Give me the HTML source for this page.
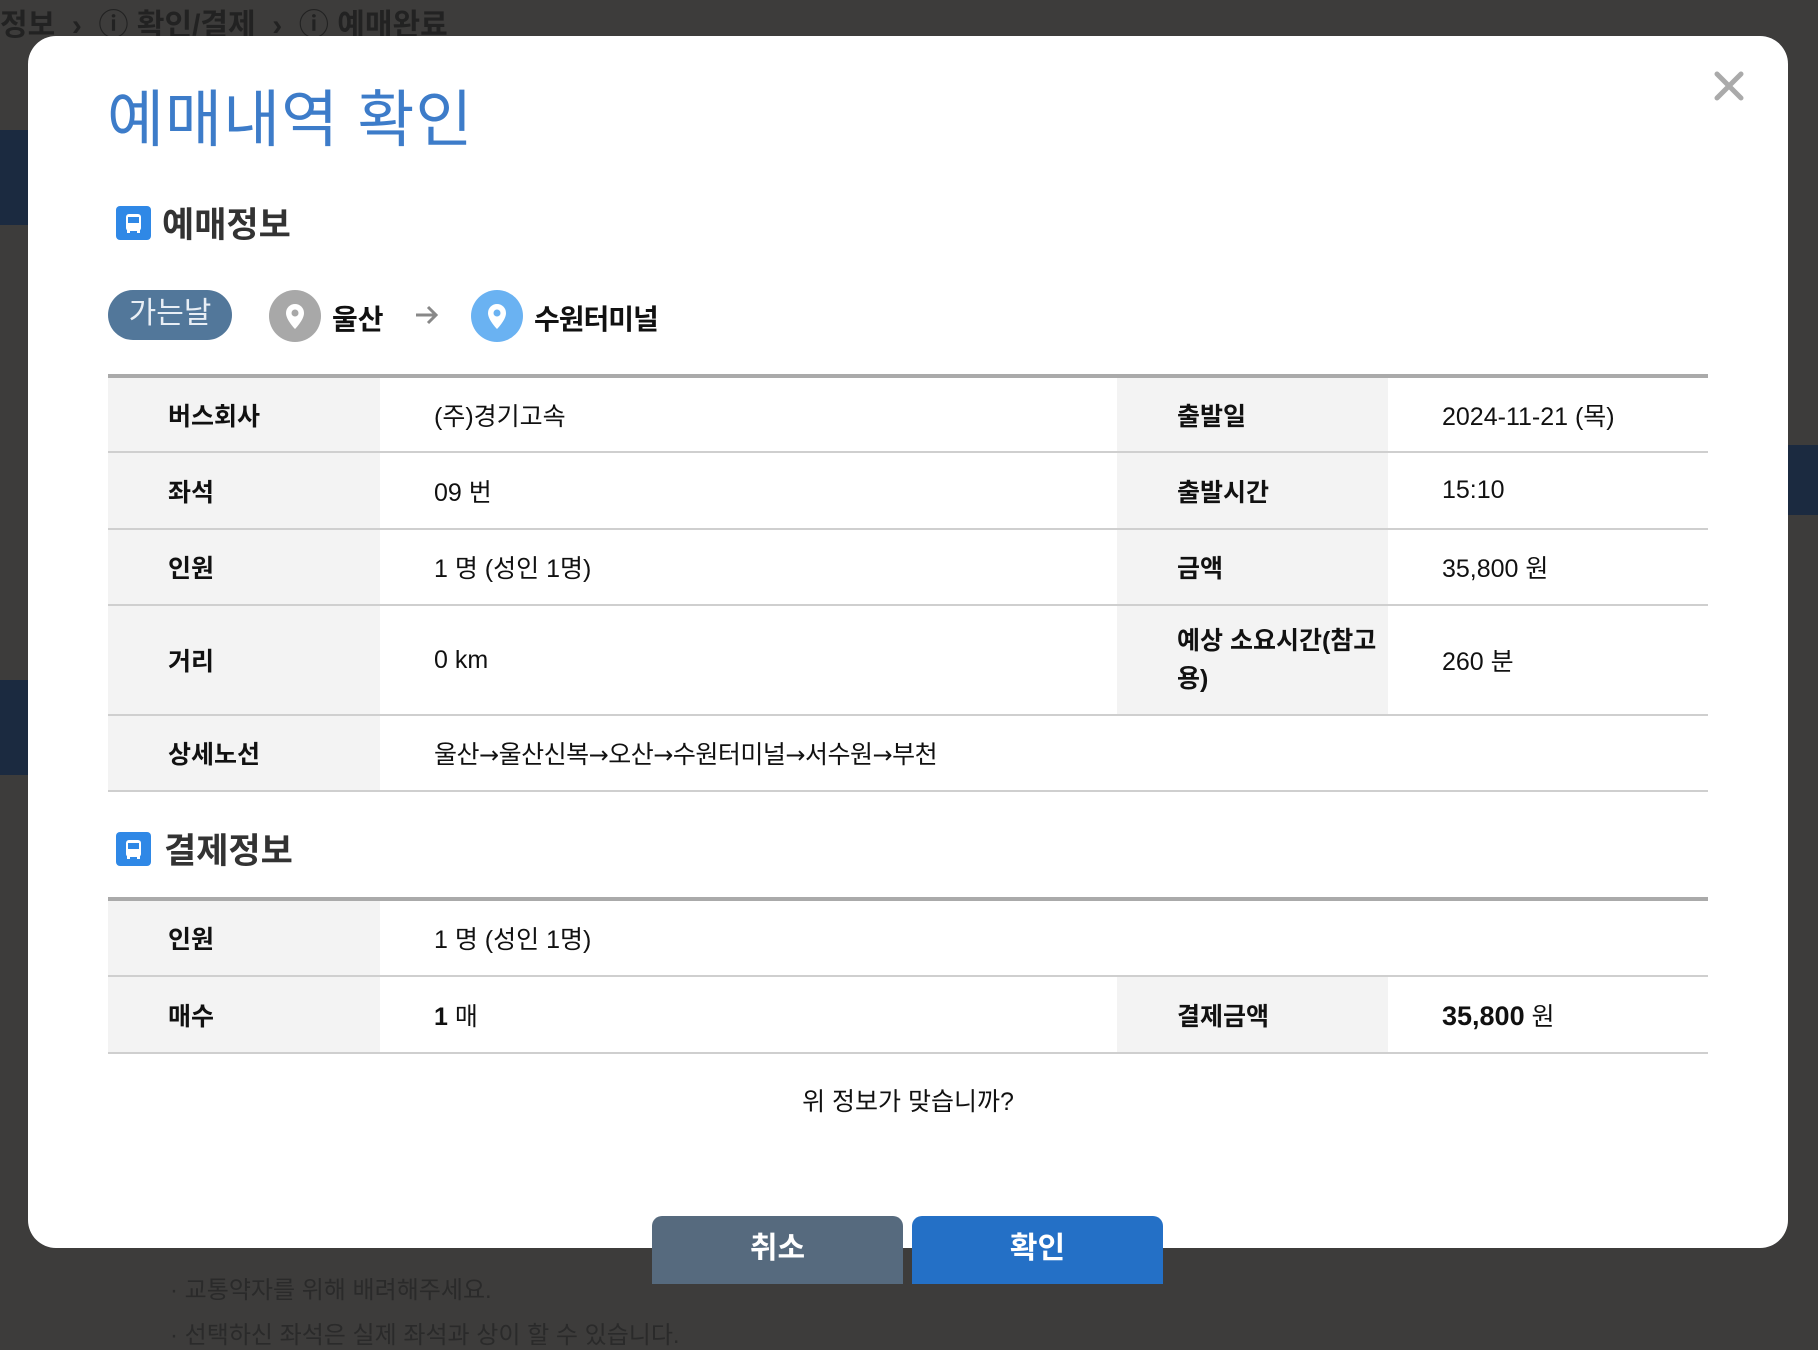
<!DOCTYPE html>
<html><head><meta charset="utf-8"><style>
*{margin:0;padding:0;box-sizing:border-box}
body{width:1818px;height:1346px;overflow:hidden;background:#3d3c3b;font-family:"Liberation Sans","Noto Sans CJK KR",sans-serif;position:relative}
.bgt{position:absolute;color:#2a2a2a;font-size:30px;font-weight:bold}
.modal{position:absolute;left:28px;top:36px;width:1760px;height:1212px;background:#fff;border-radius:28px}
.a{position:absolute}
table{position:absolute;left:80px;width:1600px;border-collapse:collapse;font-size:25px;color:#111}
td{border-bottom:2px solid #cfcfcf;vertical-align:middle}
td.l{background:#f3f3f3;font-weight:bold;padding-left:60px}
td.v{padding-left:54px}
.ar{font-family:"DejaVu Sans",sans-serif;font-size:24px}
.hd{font-size:35px;font-weight:bold;color:#333}
.ic{width:35px;height:34px;background:#2f88e6;border-radius:4px}
.pin{border-radius:50%;width:52px;height:52px}
.btn{position:absolute;top:1216px;width:251px;height:68px;border-radius:10px 10px 0 0;color:#fff;font-size:30px;font-weight:bold;text-align:center;line-height:66px}
</style></head><body>
<div class="bgt" style="left:0;top:0;color:#222">정보 &nbsp;› &nbsp;ⓘ 확인/결제 &nbsp;› &nbsp;ⓘ 예매완료</div>
<div class="a" style="left:0;top:130px;width:28px;height:95px;background:#1b2a40"></div>
<div class="a" style="left:0;top:680px;width:28px;height:95px;background:#1b2a40"></div>
<div class="a" style="left:1788px;top:445px;width:30px;height:70px;background:#1b2a40"></div>
<div class="bgt" style="left:170px;top:1270px;font-size:24px;font-weight:normal">· 교통약자를 위해 배려해주세요.</div>
<div class="bgt" style="left:170px;top:1315px;font-size:24px;font-weight:normal">· 선택하신 좌석은 실제 좌석과 상이 할 수 있습니다.</div>
<div class="modal">
 <div class="a" style="left:79px;top:33px;font-size:62px;color:#3d7cc9;letter-spacing:1px">예매내역 확인</div>
 <svg class="a" style="left:1685px;top:34px" width="32" height="32" viewBox="0 0 32 32"><path d="M4 4L28 28M28 4L4 28" stroke="#aaa" stroke-width="5" stroke-linecap="round"/></svg>
 <div class="a ic" style="left:88px;top:170px"><svg width="35" height="34" viewBox="0 0 35 34"><rect x="10" y="8" width="15" height="17" rx="3" fill="#fff"/><rect x="12" y="11" width="11" height="6" fill="#2f88e6"/><rect x="11" y="24" width="3" height="3" fill="#fff"/><rect x="21" y="24" width="3" height="3" fill="#fff"/></svg></div>
 <div class="a hd" style="left:134px;top:161px">예매정보</div>
 <div class="a" style="left:80px;top:254px;width:124px;height:50px;border-radius:25px;background:#52779a;color:#e8eef5;font-size:30px;text-align:center;line-height:48px">가는날</div>
 <div class="a pin" style="left:241px;top:254px;background:#a8a8a8"><svg width="52" height="52" viewBox="0 0 52 52"><path d="M26 14a9 9 0 0 0-9 9c0 7 9 16 9 16s9-9 9-16a9 9 0 0 0-9-9z" fill="#fff"/><circle cx="26" cy="23" r="3.5" fill="#a8a8a8"/></svg></div>
 <div class="a" style="left:304px;top:262px;font-size:28px;font-weight:bold;color:#111">울산</div>
 <svg class="a" style="left:386px;top:268px" width="26" height="22" viewBox="0 0 26 22"><path d="M2 11H22M14 3L22 11L14 19" stroke="#888" stroke-width="3" fill="none"/></svg>
 <div class="a pin" style="left:443px;top:254px;background:#6ab2f2"><svg width="52" height="52" viewBox="0 0 52 52"><path d="M26 14a9 9 0 0 0-9 9c0 7 9 16 9 16s9-9 9-16a9 9 0 0 0-9-9z" fill="#fff"/><circle cx="26" cy="23" r="3.5" fill="#6ab2f2"/></svg></div>
 <div class="a" style="left:506px;top:262px;font-size:28px;font-weight:bold;color:#111;letter-spacing:-1px">수원터미널</div>
 <table style="top:338px;border-top:4px solid #aaa">
  <colgroup><col style="width:272px"><col style="width:737px"><col style="width:271px"><col style="width:320px"></colgroup>
  <tr style="height:76px"><td class="l">버스회사</td><td class="v">(주)경기고속</td><td class="l">출발일</td><td class="v">2024-11-21 (목)</td></tr>
  <tr style="height:77px"><td class="l">좌석</td><td class="v">09 번</td><td class="l">출발시간</td><td class="v">15:10</td></tr>
  <tr style="height:76px"><td class="l">인원</td><td class="v">1 명 (성인 1명)</td><td class="l">금액</td><td class="v">35,800 원</td></tr>
  <tr style="height:110px"><td class="l" >거리</td><td class="v">0 km</td><td class="l" style="line-height:38px;padding-right:8px">예상 소요시간(참고용)</td><td class="v">260 분</td></tr>
  <tr style="height:76px"><td class="l">상세노선</td><td class="v" colspan="3" style="letter-spacing:-0.5px">울산<span class="ar">→</span>울산신복<span class="ar">→</span>오산<span class="ar">→</span>수원터미널<span class="ar">→</span>서수원<span class="ar">→</span>부천</td></tr>
 </table>
 <div class="a ic" style="left:88px;top:796px"><svg width="35" height="34" viewBox="0 0 35 34"><rect x="10" y="8" width="15" height="17" rx="3" fill="#fff"/><rect x="12" y="11" width="11" height="6" fill="#2f88e6"/><rect x="11" y="24" width="3" height="3" fill="#fff"/><rect x="21" y="24" width="3" height="3" fill="#fff"/></svg></div>
 <div class="a hd" style="left:136px;top:787px">결제정보</div>
 <table style="top:861px;border-top:4px solid #aaa">
  <colgroup><col style="width:272px"><col style="width:737px"><col style="width:271px"><col style="width:320px"></colgroup>
  <tr style="height:77px"><td class="l">인원</td><td class="v" colspan="3">1 명 (성인 1명)</td></tr>
  <tr style="height:77px"><td class="l">매수</td><td class="v"><b>1</b> 매</td><td class="l">결제금액</td><td class="v"><b style="font-size:27px">35,800</b> 원</td></tr>
 </table>
 <div class="a" style="left:0;width:1760px;top:1046px;text-align:center;font-size:25px;color:#111">위 정보가 맞습니까?</div>
</div>
<div class="btn" style="left:652px;background:#566a7e">취소</div>
<div class="btn" style="left:912px;background:#2470c6">확인</div>
</body></html>
